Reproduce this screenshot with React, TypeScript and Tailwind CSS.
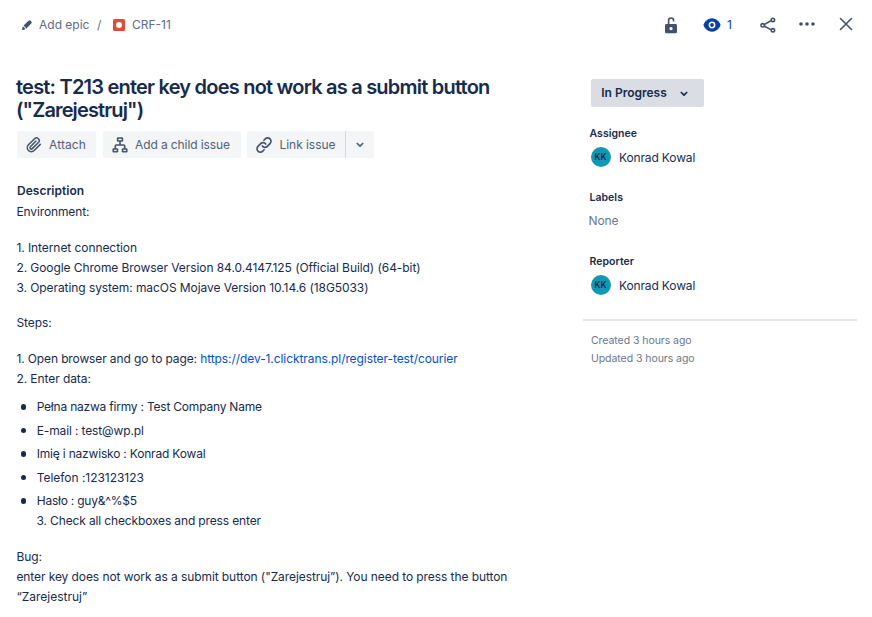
import React from "react";

const fields = "pt-px text-[10.5px] leading-[14px] font-semibold tracking-[0.03px]";

function Chevron({ className }: { className: string }) {
  return (
    <svg viewBox="0 0 8 6" className={className} fill="none" stroke="currentColor" strokeWidth="1.7" strokeLinecap="round" strokeLinejoin="round">
      <path d="M1.3 1.5 4 4.2 6.7 1.5" />
    </svg>
  );
}

function Person({ label }: { label: string }) {
  return (
    <section>
      <h3 className={fields}>{label}</h3>
      <div className="mt-[6px] ml-px flex h-5 items-center">
        <span className="flex size-5 items-center justify-center rounded-full bg-[#1098b5] text-[8.5px] font-semibold">KK</span>
        <span className="mt-[2px] ml-[8.5px] text-[12px] tracking-[-0.14px]">Konrad Kowal</span>
      </div>
    </section>
  );
}

function Header() {
  return (
    <header className="flex h-[50px] items-center text-[12px] whitespace-nowrap text-[#5e6c84]">
      <svg viewBox="0 0 12 12" className="ml-[21px] size-3 text-[#42526e]" fill="currentColor">
        <path d="M1.9 7.3 4.7 10.1 2.1 11a.8.8 0 0 1-1-1zM2.6 6.6 7.5 1.7a1.5 1.5 0 0 1 2.1 0l.7.7a1.5 1.5 0 0 1 0 2.1L5.4 9.4z" />
      </svg>
      <span className="ml-[6px] w-[50px]">Add epic</span>
      <span className="ml-[8px] w-[5px]">/</span>
      <span className="ml-[11px] flex size-3 items-center justify-center rounded-[1.5px] bg-[#e5493a]">
        <span className="size-[5.5px] rounded-full bg-white" />
      </span>
      <span className="ml-[7px]">CRF-11</span>

      <div className="ml-auto flex items-center text-[#42526e]">
        <svg viewBox="0 0 14 18" className="mb-px h-[18px] w-[14px]" fill="none">
          <rect x="1" y="8" width="12" height="9.3" rx="1.4" fill="currentColor" />
          <path d="M4.6 8V4.500a2.5 2.5 0 0 1 5 0v1" stroke="currentColor" strokeWidth="1.6" />
          <circle cx="7" cy="12.6" r="1.6" fill="white" />
        </svg>
        <svg viewBox="0 0 18 14" className="mb-px ml-[25px] h-[14px] w-[18px]">
          <path d="M9 .2C4.4.2.8 4.5.5 7c.3 2.5 3.9 6.8 8.5 6.8S17.200 9.500 17.500 7C17.200 4.500 13.600.2 9 .2z" fill="#0b41a0" />
          <circle cx="9" cy="7" r="2.65" fill="none" stroke="white" strokeWidth="1.5" />
        </svg>
        <span className="ml-[6px] w-[8px] text-[#0747a6]">1</span>
        <svg viewBox="0 0 16 16" className="ml-[25px] size-4" fill="none" stroke="currentColor" strokeWidth="1.6">
          <path d="m4.600 7.400 6.200-3.700M4.600 9.200l6.200 3.400" />
          <circle cx="2.700" cy="8.300" r="1.7" />
          <circle cx="12.900" cy="2.900" r="1.7" />
          <circle cx="12.900" cy="13.300" r="1.7" />
        </svg>
        <svg viewBox="0 0 16 4" className="mb-[2px] ml-[23px] h-1 w-4" fill="currentColor">
          <circle cx="2" cy="2" r="1.8" />
          <circle cx="8" cy="2" r="1.8" />
          <circle cx="14" cy="2" r="1.8" />
        </svg>
        <svg viewBox="0 0 14 14" className="mr-[19px] mb-[2px] ml-[24px] size-[14px]" fill="none" stroke="currentColor" strokeWidth="1.6" strokeLinecap="round">
          <path d="m1.500 1.500 11 11M12.500 1.500l-11 11" />
        </svg>
      </div>
    </header>
  );
}

function Actions() {
  const button = "flex h-[27px] items-center rounded-[2px] bg-[#f4f5f7]";
  return (
    <div className="mt-[9px] ml-px flex text-[12px] text-[#505f79]">
      <button className={`${button} w-[79px] pl-[9px]`}>
        <svg viewBox="0 0 24 24" className="size-[16px] shrink-0 text-[#42526e]" fill="none" stroke="currentColor" strokeWidth="2.3" strokeLinecap="round">
          <path d="m21.400 11.100-9.200 9.100a6 6 0 0 1-8.500-8.500l9.200-9.100a4 4 0 0 1 5.700 5.700l-9.200 9.100a2 2 0 0 1-2.900-2.800l8.500-8.500" />
        </svg>
        <span className="mt-px ml-[7px] tracking-[0.1px]">Attach</span>
      </button>
      <button className={`${button} ml-[7px] w-[138px] pl-[9px]`}>
        <svg viewBox="0 0 16 16" className="size-4 shrink-0 text-[#42526e]" fill="none" stroke="currentColor" strokeWidth="1.6" strokeLinejoin="round">
          <rect x="5.600" y="1" width="4.800" height="3" rx=".5" />
          <rect x="1.200" y="12" width="4.300" height="2.800" rx=".5" />
          <rect x="10.500" y="12" width="4.300" height="2.800" rx=".5" />
          <path d="M8 4v4M3.300 12V9a1 1 0 0 1 1-1h7.400a1 1 0 0 1 1 1v3" />
        </svg>
        <span className="mt-px ml-[7px] tracking-[-0.1px]">Add a child issue</span>
      </button>
      <button className={`${button} ml-[6px] w-[98px] rounded-r-none pl-[9px]`}>
        <svg viewBox="0 0 24 24" className="size-4 shrink-0 text-[#42526e]" fill="none" stroke="currentColor" strokeWidth="2.5" strokeLinecap="round">
          <path d="M9.500 13.500a5 5 0 0 0 7.500.5l4-4a5 5 0 0 0-7.100-7.100l-2 2M14.500 10.500A5 5 0 0 0 7 10l-4 4a5 5 0 0 0 7.100 7.100l2-2" />
        </svg>
        <span className="mt-px ml-[7.500px] tracking-[-0.05px]">Link issue</span>
      </button>
      <button className={`${button} h-[26px] w-[29px] justify-center rounded-l-none border-l border-[#d5d9e0]`}>
        <Chevron className="mt-px h-[6px] w-[8px]" />
      </button>
    </div>
  );
}

const credentials = [
  { text: "Pełna nazwa firmy : Test Company Name", spacing: "tracking-[-0.21px]" },
  { text: "E-mail : test@wp.pl", spacing: "tracking-[-0.13px]" },
  { text: "Imię i nazwisko : Konrad Kowal", spacing: "tracking-[-0.19px]" },
  { text: "Telefon :123123123", spacing: "tracking-[-0.03px]" },
  { text: "Hasło : guy&^%$5", spacing: "tracking-[-0.22px]" },
];

function Description() {
  return (
    <div className="text-[12px] leading-5 tracking-[-0.07px] whitespace-nowrap">
      <h2 className="mt-[23px] ml-px text-[12px] font-semibold tracking-[0.03px]">Description</h2>
      <p className="mt-px ml-[0.4px] tracking-[-0.12px]">Environment:</p>
      <div className="mt-4 ml-[0.4px]">
        <p>1. Internet connection</p>
        <p>2. Google Chrome Browser Version 84.0.4147.125 (Official Build) (64-bit)</p>
        <p>3. Operating system: macOS Mojave Version 10.14.6 (18G5033)</p>
      </div>
      <p className="mt-[15px] ml-[0.4px]">Steps:</p>
      <div className="mt-4 ml-[0.4px]">
        <p className="tracking-[-0.12px]">
          1. Open browser and go to page: <a className="tracking-[-0.080px] text-[#0052cc]">https://dev-1.clicktrans.pl/register-test/courier</a>
        </p>
        <p>2. Enter data:</p>
      </div>
      <ul className="mt-2 flex flex-col gap-[3.5px]">
        {credentials.map(({ text, spacing }) => (
          <li key={text} className={`flex items-center ${spacing}`}>
            <span className="mr-[10.5px] ml-[5px] size-[5.2px] rounded-full bg-[#172b4d]" />
            {text}
          </li>
        ))}
      </ul>
      <p className="ml-[20.5px] tracking-[-0.14px]">3. Check all checkboxes and press enter</p>
      <div className="mt-4 ml-[0.4px]">
        <p>Bug:</p>
        <p className="tracking-[-0.08px]">enter key does not work as a submit button ("Zarejestruj”). You need to press the button</p>
        <p className="tracking-normal">“Zarejestruj”</p>
      </div>
    </div>
  );
}

export default function App() {
  return (
    <div className="h-[617px] w-[872px] overflow-hidden bg-white font-['Inter','Liberation_Sans',sans-serif] text-[#172b4d]">
      <Header />
      <div className="flex">
        <main className="w-[567px] pt-[26px] pl-4">
          <h1 className="text-[20px] leading-[23px] font-[560] tracking-[-0.78px]">
            test: T213 enter key does not work as a submit button
            <br />
            <span className="tracking-[-0.86px]">("Zarejestruj")</span>
          </h1>
          <Actions />
          <Description />
        </main>
        <aside className="w-[290px] pt-[29px] pl-[16px]">
          <div className="ml-[8px]">
            <button className="flex h-7 w-[113px] items-center rounded-[2px] bg-[#dadde3] pl-[10px] text-[12px] font-semibold">
              <span className="w-[66px] whitespace-nowrap">In Progress</span>
              <Chevron className="mt-[2px] ml-[13px] h-[6px] w-[8px]" />
            </button>
          </div>
          <div className="mt-[19px] ml-[6.500px] flex flex-col gap-[23px]">
            <Person label="Assignee" />
            <section className="h-[41px]">
              <h3 className={fields}>Labels</h3>
              <p className="mt-[8px] -ml-px text-[12px] leading-4 tracking-[-0.1px] text-[#6b778c]">None</p>
            </section>
            <Person label="Reporter" />
          </div>
          <hr className="mt-[24px] h-[2px] border-0 bg-[#e6e7eb]" />
          <div className="mt-[10.5px] ml-[8px] text-[10.5px] leading-[18px] tracking-[-0.06px] text-[#6b778c]">
            <p>Created 3 hours ago</p>
            <p>Updated 3 hours ago</p>
          </div>
        </aside>
      </div>
    </div>
  );
}
